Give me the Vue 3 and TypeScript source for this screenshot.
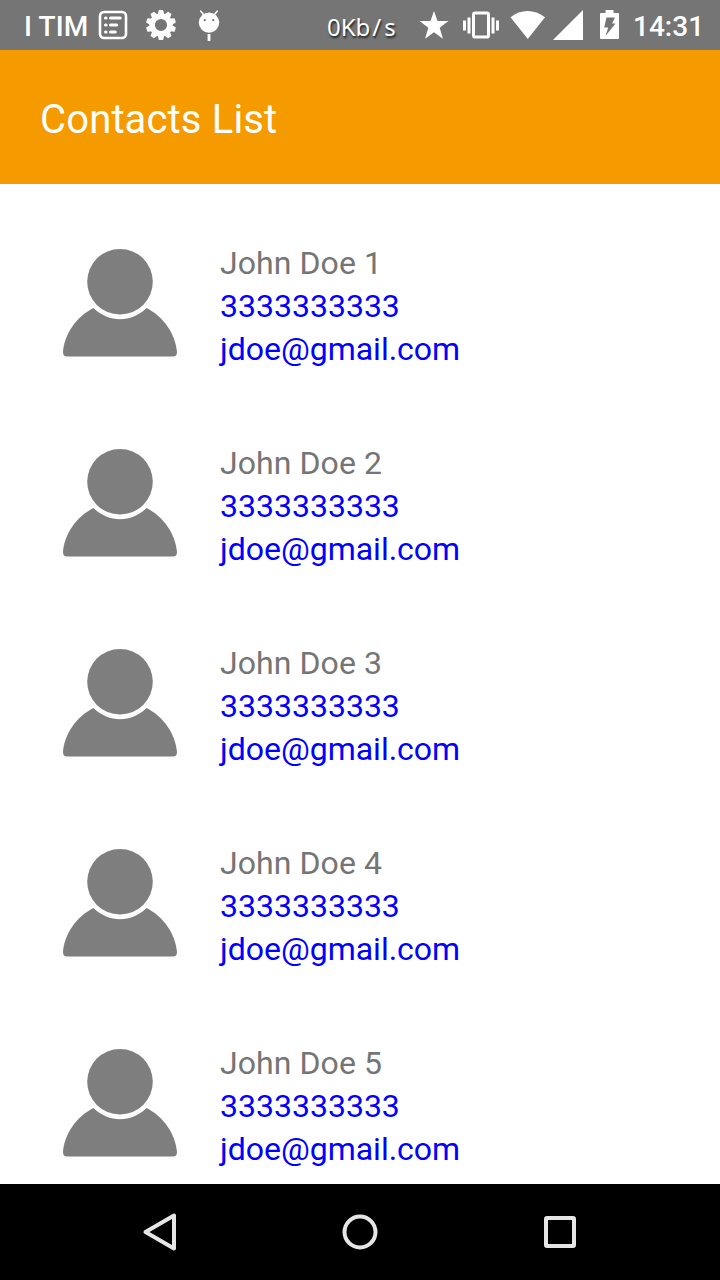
<script setup lang="ts">
interface Contact {
  id: number
  name: string
  phone: string
  email: string
}

const contacts: Contact[] = [1, 2, 3, 4, 5].map((id) => ({
  id,
  name: `John Doe ${id}`,
  phone: '3333333333',
  email: 'jdoe@gmail.com',
}))

const teeth: number[] = Array.from({ length: 10 }, (_, i) => i * 36)
</script>

<template>
  <div class="screen">
    <header class="status">
      <span class="carrier">I TIM</span>
      <svg class="list-icon" width="30" height="30" viewBox="0 0 30 30">
        <rect x="2" y="2" width="26" height="26" rx="4" fill="none" stroke="#fff" stroke-width="2.6" />
        <g stroke="#fff" stroke-width="3.2" stroke-linecap="round">
          <path d="M7.6 8h.4M12.6 8h9.6M7.6 15h.4M12.6 15h6M7.6 22h.4M12.6 22h4.6" />
        </g>
      </svg>
      <svg class="gear-icon" width="30" height="30" viewBox="-15 -15 30 30">
        <circle r="8.9" fill="none" stroke="#fff" stroke-width="5.6" />
        <path v-for="a in teeth" :key="a" :transform="`rotate(${a})`" d="M-3.2-10.5L-2.3-14.5Q-2.2-15-1.6-15H1.6Q2.2-15 2.3-14.5L3.2-10.5Z" fill="#fff" />
      </svg>
      <svg class="bug-icon" width="24" height="32" viewBox="0 0 24 32">
        <path d="M5.5 5.500L2.800 2.200M16.500 5.500L19.200 2.200" stroke="#fff" stroke-width="1.6" stroke-linecap="round" />
        <ellipse cx="11" cy="13.600" rx="10.2" ry="10.2" fill="#fff" />
        <circle cx="6.8" cy="11.200" r="1.1" fill="#757575" />
        <circle cx="15.2" cy="11.200" r="1.1" fill="#757575" />
        <rect x="9.6" y="25" width="2.800" height="7" fill="#fff" />
      </svg>
      <span class="speed">0Kb<span class="slash">/</span>s</span>
      <svg class="star-icon" width="30" height="30" viewBox="0 0 30 30">
        <path d="M15 1L18.5 11H29.5L20.7 17.7L23.9 28.8L15 22.2L6.1 28.8L9.3 17.7L.5 11H11.5Z" fill="#fff" />
      </svg>
      <svg class="vibrate-icon" width="36" height="30" viewBox="0 0 36 30">
        <rect x="10.5" y="3" width="15" height="24" rx="1.6" fill="none" stroke="#fff" stroke-width="3" />
        <path d="M0 10.5h3v10H0zM4.5 7.5h3v16h-3zM28.5 7.5h3v16h-3zM33 10.5h3v10h-3z" fill="#fff" />
      </svg>
      <svg class="wifi-icon" width="36" height="30" viewBox="0 0 36 30">
        <path d="M.5 7.2Q8.500 1 17.500 1T35 7.200L17.800 29Z" fill="#fff" />
      </svg>
      <svg class="signal-icon" width="30" height="30" viewBox="0 0 30 30">
        <path d="M30 0V30H0Z" fill="#fff" />
      </svg>
      <svg class="battery-icon" width="19" height="30" viewBox="0 0 19 30">
        <path d="M5.500 0h8v3H18Q19 3 19 4V28Q19 29 18 29H1Q0 29 0 28V4Q0 3 1 3h4.500z" fill="#fff" />
        <path d="M6.500 7.500H15L12 13.500H15.500L5.500 26L8.200 17.500H4.200Z" fill="#757575" />
      </svg>
      <span class="clock">14:31</span>
    </header>

    <div class="toolbar"><h1>Contacts List</h1></div>

    <main class="contacts">
      <article v-for="c in contacts" :key="c.id" class="contact">
        <svg class="avatar" width="116" height="110" viewBox="0 0 116 110">
          <circle cx="58" cy="33.700" r="32.800" fill="#7e7e7e" />
          <path d="M31.500 60C14 69 2.500 86 1 104Q1 108.500 5 108.500H111Q115 108.500 115 104C113.500 86 102 69 84.500 60C69 75 47 75 31.500 60Z" fill="#7e7e7e" />
        </svg>
        <div class="details">
          <span class="name">{{ c.name }}</span>
          <span class="link">{{ c.phone }}</span>
          <span class="link">{{ c.email }}</span>
        </div>
      </article>
    </main>

    <nav class="navbar">
      <svg width="40" height="40" viewBox="0 0 40 40"><path d="M5.500 20L34 3.500V36.500Z" /></svg>
      <svg width="40" height="40" viewBox="0 0 40 40"><circle cx="20" cy="20" r="15.500" /></svg>
      <svg width="40" height="40" viewBox="0 0 40 40"><rect x="6" y="6" width="28" height="28" rx="1" /></svg>
    </nav>
  </div>
</template>

<style>
body {
  margin: 0;
  overflow: hidden;
}
</style>

<style scoped>
.screen {
  display: flex;
  flex-direction: column;
  width: 720px;
  height: 1280px;
  overflow: hidden;
  background: #fff;
  font-family: Roboto, "Liberation Sans", sans-serif;
}

.status {
  display: flex;
  flex: none;
  align-items: center;
  box-sizing: border-box;
  height: 50px;
  padding-left: 24px;
  background: #757575;
  color: #fff;
  white-space: nowrap;
}

.status svg {
  flex: none;
}

.carrier {
  width: 74px;
  padding-top: 2px;
  font-size: 28px;
  font-weight: 500;
  letter-spacing: 0.15px;
}

.gear-icon {
  margin-left: 18px;
}

.bug-icon {
  margin-left: 22px;
}

.speed {
  width: 72px;
  margin-left: 105px;
  padding-top: 4px;
  font-family: "Noto Sans", sans-serif;
  font-size: 24px;
  line-height: 32px;
  text-shadow: 1px 2px 2px #222;
}

.slash {
  margin: 0 3px 0 2px;
}

.star-icon {
  margin-left: 20px;
}

.vibrate-icon {
  margin-left: 14px;
}

.wifi-icon {
  margin-left: 11px;
}

.signal-icon {
  margin-left: 7px;
}

.battery-icon {
  margin-left: 17px;
}

.clock {
  margin-left: 14px;
  padding-top: 2px;
  font-size: 28px;
  font-weight: 500;
}

.toolbar {
  display: flex;
  flex: none;
  align-items: center;
  box-sizing: border-box;
  height: 134px;
  padding: 4px 40px 0;
  background: #f59b00;
}

h1 {
  margin: 0;
  color: #fff;
  font-size: 40px;
  font-weight: 400;
  letter-spacing: 0.15px;
}

.contacts {
  flex: 1;
  min-height: 0;
  padding-top: 24px;
  box-sizing: border-box;
  overflow: hidden;
}

.contact {
  display: flex;
  box-sizing: border-box;
  height: 200px;
  padding: 34px 0 0 62px;
}

.avatar {
  flex: none;
  margin-top: 6px;
}

.details {
  display: flex;
  flex-direction: column;
  margin-left: 42px;
  font-size: 32px;
  line-height: 43px;
}

.name {
  color: #757575;
  letter-spacing: 0.07px;
}

.link {
  color: #00f;
}

.navbar {
  display: flex;
  flex: none;
  align-items: center;
  justify-content: center;
  gap: 160px;
  height: 96px;
  background: #000;
}

.navbar svg {
  fill: none;
  stroke: #e6e6e6;
  stroke-width: 4;
  stroke-linejoin: round;
}
</style>
